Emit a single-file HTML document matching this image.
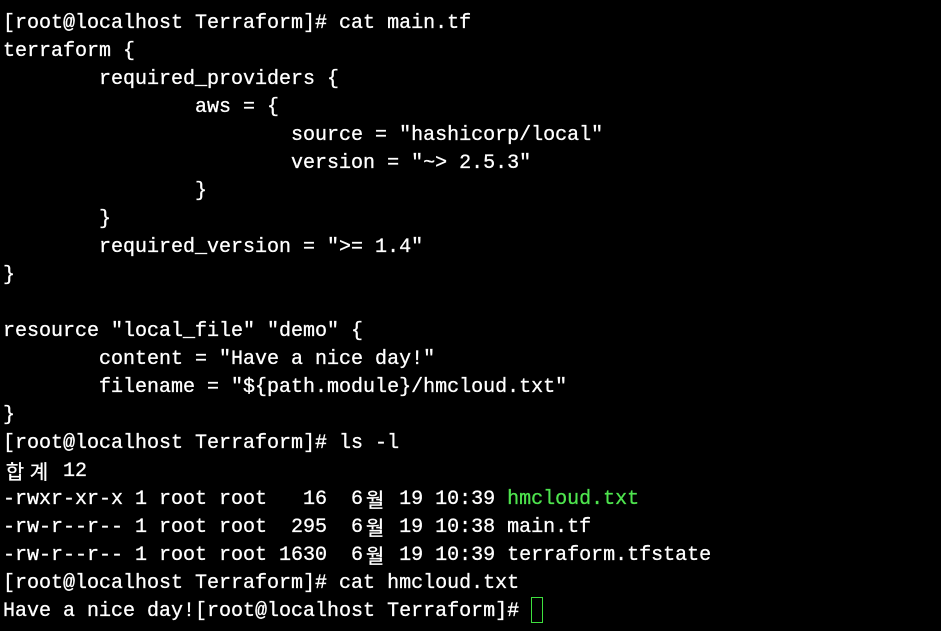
<!DOCTYPE html>
<html><head><meta charset="utf-8"><style>
html,body{margin:0;padding:0;background:#000;width:941px;height:631px;overflow:hidden}
pre{margin:0;position:absolute;left:3px;top:10px;font-family:"Liberation Mono","Noto Sans CJK KR",monospace;font-size:20px;line-height:28px;color:#fff;-webkit-text-stroke:0.3px #fff}
.k{display:inline-block;width:24px;text-align:center;font-family:"Noto Sans CJK KR",sans-serif;font-size:20px;line-height:26px;vertical-align:top}
.g{color:#4ee44e;-webkit-text-stroke:0.3px #4ee44e}
.c{display:inline-block;width:10px;height:24px;border:1px solid #3ee03e;vertical-align:top;margin-top:-1px}
</style></head><body><pre>[root@localhost Terraform]# cat main.tf
terraform {
        required_providers {
                aws = {
                        source = "hashicorp/local"
                        version = "~> 2.5.3"
                }
        }
        required_version = ">= 1.4"
}

resource "local_file" "demo" {
        content = "Have a nice day!"
        filename = "${path.module}/hmcloud.txt"
}
[root@localhost Terraform]# ls -l
<span class="k">합</span><span class="k">계</span> 12
-rwxr-xr-x 1 root root   16  6<span class="k">월</span> 19 10:39 <span class="g">hmcloud.txt</span>
-rw-r--r-- 1 root root  295  6<span class="k">월</span> 19 10:38 main.tf
-rw-r--r-- 1 root root 1630  6<span class="k">월</span> 19 10:39 terraform.tfstate
[root@localhost Terraform]# cat hmcloud.txt
Have a nice day![root@localhost Terraform]# <span class="c"></span></pre>
</body></html>
